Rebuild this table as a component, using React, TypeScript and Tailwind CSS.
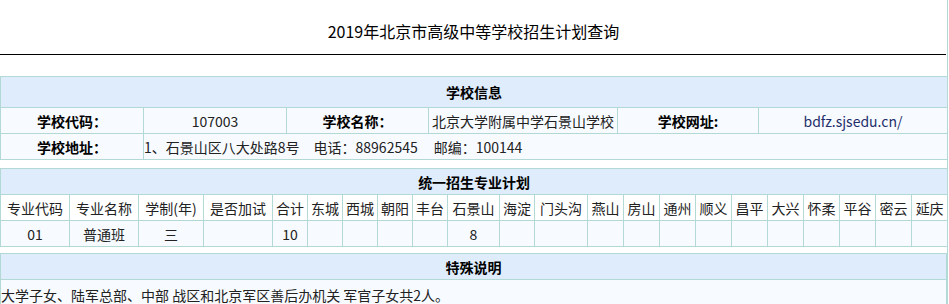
const districts = [
  "东城", "西城", "朝阳", "丰台", "石景山", "海淀", "门头沟", "燕山", "房山",
  "通州", "顺义", "昌平", "大兴", "怀柔", "平谷", "密云", "延庆",
]

const planCols = [
  "w-[69px]", "w-[69px]", "w-[65px]", "w-[69px]", "w-[35px]", "w-[35px]", "w-[35px]",
  "w-[35px]", "w-[35px]", "w-[52px]", "w-[35px]", "w-[53px]", "w-[36px]", "w-[36px]",
  "w-[36px]", "w-[36px]", "w-[36px]", "w-[36px]", "w-[36px]", "w-[36px]", "w-[36px]", "w-[36px]",
]

const cell = "border border-[#b2d9d6] p-0 text-center"
const label = "border border-[#b2d9d6] p-0 text-center font-bold text-black"

export default function App() {
  return (
    <div className="w-[949px] h-[304px] overflow-hidden bg-white font-['Noto_Sans_CJK_SC',sans-serif] text-sm text-[#222]">
      <div className="w-[948px] h-full border-r border-[#b2d9d6]">
        {/* Title */}
        <div className="h-[54px] flex items-center justify-center pt-[8px] text-base text-black">
          2019年北京市高级中等学校招生计划查询
        </div>
        <div className="h-px bg-black mr-px" />
        <div className="h-[21px]" />

        {/* 学校信息 */}
        <table className="w-[947px] table-fixed border-collapse">
          <colgroup>
            <col className="w-[143px]" />
            <col className="w-[143px]" />
            <col className="w-[142px]" />
            <col className="w-[189px]" />
            <col className="w-[141px]" />
            <col className="w-[189px]" />
          </colgroup>
          <tbody>
            <tr className="h-[31px] bg-[#dfecfb]">
              <td colSpan={6} className={label}>学校信息</td>
            </tr>
            <tr className="h-[26px] bg-[#f7fbff]">
              <td className={label}>学校代码：</td>
              <td className={cell}>107003</td>
              <td className={label}>学校名称：</td>
              <td className={cell + " whitespace-nowrap"}>北京大学附属中学石景山学校</td>
              <td className={label}>学校网址:</td>
              <td className={cell + " text-[#1f2d6b]"}>bdfz.sjsedu.cn/</td>
            </tr>
            <tr className="h-[26px] bg-[#f7fbff]">
              <td className={label}>学校地址：</td>
              <td colSpan={5} className="border border-[#b2d9d6] p-0 text-left whitespace-nowrap">
                1、石景山区八大处路8号
                <span className="ml-[14px]">电话：88962545</span>
                <span className="ml-[16px]">邮编：100144</span>
              </td>
            </tr>
          </tbody>
        </table>

        <div className="h-[8px]" />

        {/* 统一招生专业计划 */}
        <table className="w-[947px] table-fixed border-collapse">
          <colgroup>
            {planCols.map((w, i) => (
              <col key={i} className={w} />
            ))}
          </colgroup>
          <tbody>
            <tr className="h-[26px] bg-[#dfecfb]">
              <td colSpan={22} className={label}>统一招生专业计划</td>
            </tr>
            <tr className="h-[26px] bg-white">
              <td className={cell}>专业代码</td>
              <td className={cell}>专业名称</td>
              <td className={cell}>学制(年)</td>
              <td className={cell}>是否加试</td>
              <td className={cell}>合计</td>
              {districts.map((d) => (
                <td key={d} className={cell + " whitespace-nowrap"}>{d}</td>
              ))}
            </tr>
            <tr className="h-[26px] bg-[#f7fbff]">
              <td className={cell}>01</td>
              <td className={cell}>普通班</td>
              <td className={cell}>三</td>
              <td className={cell}></td>
              <td className={cell}>10</td>
              {districts.map((d) => (
                <td key={d} className={cell}>{d === "石景山" ? "8" : ""}</td>
              ))}
            </tr>
          </tbody>
        </table>

        <div className="h-[6px]" />

        {/* 特殊说明 */}
        <table className="w-[947px] table-fixed border-collapse">
          <tbody>
            <tr className="h-[26px] bg-[#dfecfb]">
              <td className={label}>特殊说明</td>
            </tr>
            <tr className="h-[30px] bg-[#f7fbff]">
              <td className="border border-[#b2d9d6] p-0 text-left whitespace-nowrap">
                大学子女、陆军总部、中部 战区和北京军区善后办机关 军官子女共2人。
              </td>
            </tr>
          </tbody>
        </table>
      </div>
    </div>
  )
}
